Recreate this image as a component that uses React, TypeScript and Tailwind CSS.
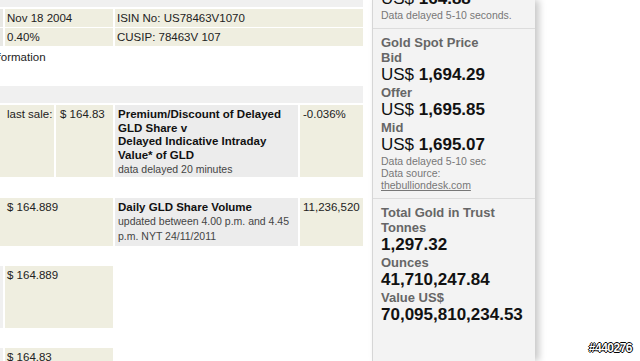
import React from 'react';

const beige = 'bg-[#efeee0]';
const grey = 'bg-[#ececec]';

const Price: React.FC<{ value: string; prefix?: boolean }> = ({ value, prefix = true }) => (
  <div className="h-[20px] leading-[20px] text-[17px] text-[#111] whitespace-nowrap">
    {prefix && <span>US$ </span>}
    <span className="font-bold">{value}</span>
  </div>
);

const Label: React.FC<{ children: React.ReactNode }> = ({ children }) => (
  <div className="h-[15px] leading-[15px] text-[13px] font-bold text-[#666]">{children}</div>
);

const Small: React.FC<{ children: React.ReactNode }> = ({ children }) => (
  <div className="h-[12px] leading-[12px] text-[10.5px] text-[#777] whitespace-nowrap">{children}</div>
);

const App: React.FC = () => {
  return (
    <div className="relative flex w-[640px] h-[361px] overflow-hidden bg-white font-['Liberation_Sans',Arial,sans-serif] text-[11.5px] text-[#222]">
      {/* left column: fund tables */}
      <div className="w-[363px] shrink-0">
        <div className="h-[7px] bg-[#f0f0f0]" />

        <div className="mt-[2px] grid grid-cols-[3px_108px_1fr] gap-x-[2px] gap-y-[1px]">
          <div className="bg-[#e8e8e4]" />
          <div className={`${beige} h-[18px] leading-[18px] pl-[2px]`}>Nov 18 2004</div>
          <div className={`${beige} h-[18px] leading-[18px] pl-[2px]`}>ISIN No: US78463V1070</div>
          <div className="bg-[#e8e8e4]" />
          <div className={`${beige} h-[18px] leading-[18px] pl-[2px]`}>0.40%</div>
          <div className={`${beige} h-[18px] leading-[18px] pl-[2px]`}>CUSIP: 78463V 107</div>
        </div>

        <div className="mt-[4px] h-[14px] leading-[14px] -ml-[12px] whitespace-nowrap">Information</div>

        <div className="mt-[22px] h-[17px] bg-[#f0f0f0]" />

        {/* premium / discount */}
        <div className="mt-[2px] grid grid-cols-[54px_57px_183px_63px] gap-x-[2px]">
          <div className={`${beige} pl-[7px] pt-[3px] leading-[13px] whitespace-nowrap`}>last sale:</div>
          <div className={`${beige} pl-[4px] pt-[3px] leading-[13px] whitespace-nowrap`}>$ 164.83</div>
          <div className={`${grey} pl-[3px] pt-[3px] pb-[1px]`}>
            <div className="font-bold leading-[13.5px] text-[#111]">
              Premium/Discount of Delayed
              <br />
              GLD Share v
              <br />
              Delayed Indicative Intraday
              <br />
              Value* of GLD
            </div>
            <div className="text-[10.5px] leading-[14px] text-[#444]">data delayed 20 minutes</div>
          </div>
          <div className={`${beige} pl-[3px] pt-[3px] leading-[13px]`}>-0.036%</div>
        </div>

        {/* daily volume */}
        <div className="mt-[21px] grid grid-cols-[113px_183px_63px] gap-x-[2px]">
          <div className={`${beige} pl-[7px] pt-[3px] leading-[13px]`}>$ 164.889</div>
          <div className={`${grey} pl-[3px] pt-[3px] pb-[3px]`}>
            <div className="font-bold leading-[13px] text-[#111]">Daily GLD Share Volume</div>
            <div className="text-[10.5px] leading-[14.5px] text-[#444] pr-[4px]">
              updated between 4.00 p.m. and 4.45 p.m. NYT 24/11/2011
            </div>
          </div>
          <div className={`${beige} pl-[3px] pt-[3px] leading-[13px]`}>11,236,520</div>
        </div>

        <div className="mt-[20px] grid grid-cols-[3px_108px] gap-x-[2px]">
          <div className="bg-[#f0f0f0]" />
          <div className={`${beige} h-[62px] pl-[2px] pt-[3px] leading-[13px]`}>$ 164.889</div>
        </div>

        <div className="mt-[20px] grid grid-cols-[3px_108px] gap-x-[2px]">
          <div className="bg-[#f0f0f0]" />
          <div className={`${beige} h-[40px] pl-[2px] pt-[3px] leading-[13px]`}>$ 164.83</div>
        </div>
      </div>

      {/* right sidebar: prices */}
      <div className="ml-[9px] w-[163px] shrink-0 self-stretch border-l border-[#d6d6d6] bg-[#f3f3f3] shadow-[4px_0_7px_rgba(0,0,0,0.22)]">
        <div className="-mt-[17px] pt-[6px] pb-[7px] pl-[8px] border-b border-[#dcdcdc]">
          <Price value="164.88" />
          <Small>Data delayed 5-10 seconds.</Small>
        </div>

        <div className="pt-[6px] pb-[7px] pl-[8px] border-b border-[#dcdcdc]">
          <Label>Gold Spot Price</Label>
          <Label>Bid</Label>
          <Price value="1,694.29" />
          <Label>Offer</Label>
          <Price value="1,695.85" />
          <Label>Mid</Label>
          <Price value="1,695.07" />
          <Small>Data delayed 5-10 sec</Small>
          <Small>Data source:</Small>
          <Small>
            <span className="underline">thebulliondesk.com</span>
          </Small>
        </div>

        <div className="pt-[6px] pl-[8px]">
          <Label>Total Gold in Trust</Label>
          <Label>Tonnes</Label>
          <Price value="1,297.32" prefix={false} />
          <Label>Ounces</Label>
          <Price value="41,710,247.84" prefix={false} />
          <Label>Value US$</Label>
          <Price value="70,095,810,234.53" prefix={false} />
        </div>
      </div>

      <div className="absolute right-[8px] bottom-[4px] text-[12px] font-bold text-white tracking-[-0.5px] [text-shadow:-1px_0_#000,1px_0_#000,0_-1px_#000,0_1px_#000]">
        #440276
      </div>
    </div>
  );
};

export default App;
